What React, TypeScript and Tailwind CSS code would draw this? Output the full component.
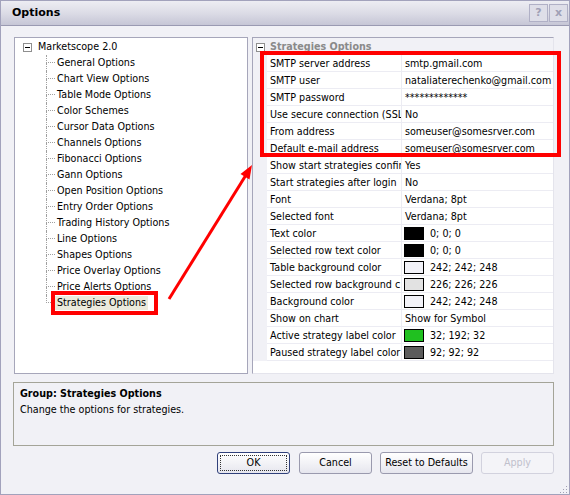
import React from 'react';

const treeItems = [
  'General Options',
  'Chart View Options',
  'Table Mode Options',
  'Color Schemes',
  'Cursor Data Options',
  'Channels Options',
  'Fibonacci Options',
  'Gann Options',
  'Open Position Options',
  'Entry Order Options',
  'Trading History Options',
  'Line Options',
  'Shapes Options',
  'Price Overlay Options',
  'Price Alerts Options',
  'Strategies Options',
];

type Row = { label: string; value: string; color?: string };

// labels are written as far as the narrow column shows them
const rows: Row[] = [
  { label: 'SMTP server address', value: 'smtp.gmail.com' },
  { label: 'SMTP user', value: 'nataliaterechenko@gmail.com' },
  { label: 'SMTP password', value: '*************' },
  { label: 'Use secure connection (SSL', value: 'No' },
  { label: 'From address', value: 'someuser@somesrver.com' },
  { label: 'Default e-mail address', value: 'someuser@somesrver.com' },
  { label: 'Show start strategies confir', value: 'Yes' },
  { label: 'Start strategies after login', value: 'No' },
  { label: 'Font', value: 'Verdana; 8pt' },
  { label: 'Selected font', value: 'Verdana; 8pt' },
  { label: 'Text color', value: '0; 0; 0', color: '#000000' },
  { label: 'Selected row text color', value: '0; 0; 0', color: '#000000' },
  { label: 'Table background color', value: '242; 242; 248', color: '#f2f2f8' },
  { label: 'Selected row background c', value: '226; 226; 226', color: '#e2e2e2' },
  { label: 'Background color', value: '242; 242; 248', color: '#f2f2f8' },
  { label: 'Show on chart', value: 'Show for Symbol' },
  { label: 'Active strategy label color', value: '32; 192; 32', color: '#20c020' },
  { label: 'Paused strategy label color', value: '92; 92; 92', color: '#5c5c5c' },
];

// small [-] expander box used by the tree and the grid category
function Minus() {
  return (
    <div className="w-[9px] h-[9px] shrink-0 border border-[#8f8f8f] bg-white flex items-center justify-center">
      <div className="w-[5px] h-px bg-black" />
    </div>
  );
}

function TitleBar() {
  return (
    <div className="h-[25px] shrink-0 flex items-center justify-between pl-[11px] pr-[1px] bg-gradient-to-b from-[#ededf3] via-[#dcdce6] to-[#c6c6d6] border-b border-[#9a9ab2]">
      <span className="text-[11px] font-bold text-black">Options</span>
      <div className="flex gap-px">
        <div className="w-[19px] h-[18px] border border-[#b0b0c6] bg-[#dedee8] flex items-center justify-center text-[11px] font-bold text-[#a0a0b6]">
          ?
        </div>
        <div className="w-[19px] h-[18px] border border-[#b0b0c6] bg-[#dedee8] flex items-center justify-center text-[11px] font-bold text-[#a0a0b6]">
          x
        </div>
      </div>
    </div>
  );
}

function Tree() {
  return (
    <div className="w-[234px] h-[337px] shrink-0 border border-[#a6a6ba] bg-white pt-px">
      <div className="flex items-center h-[16px] pl-[8px]">
        <Minus />
        <span className="ml-[6px] leading-[16px]">Marketscope 2.0</span>
      </div>
      {treeItems.map((item, i) => {
        const last = i === treeItems.length - 1;
        return (
          <div key={item} className="flex h-[16px]">
            <div className="ml-[31px] w-[9px] flex flex-col">
              <div className="h-[8px] border-l border-b border-dotted border-[#a0a0a0]" />
              <div className={`flex-1 border-dotted border-[#a0a0a0] ${last ? '' : 'border-l'}`} />
            </div>
            <span
              className={`self-center h-[14px] leading-[14px] px-[2px] ${last ? 'bg-[#ebeadc]' : ''}`}
            >
              {item}
            </span>
          </div>
        );
      })}
    </div>
  );
}

function Grid() {
  return (
    <div className="w-[302px] h-[337px] shrink-0 border border-[#a6a6ba] border-r-[#e4e4ec] border-b-[#e4e4ec] bg-white flex flex-col">
      <div className="flex h-[17px] bg-[#f1f1f6] items-center pt-px">
        <div className="w-[14px] flex justify-center">
          <Minus />
        </div>
        <span className="pl-[3px] font-bold text-[#8a8a8a]">Strategies Options</span>
      </div>
      {rows.map((r) => (
        <div key={r.label} className="flex h-[17px]">
          <div className="w-[14px] shrink-0 bg-[#f1f1f6]" />
          <div className="flex flex-1 border-b border-[#ececf3] bg-white">
            <div className="w-[135px] shrink-0 pl-[3px] pt-px border-r border-[#ececf3] overflow-hidden whitespace-nowrap leading-[16px]">
              {r.label}
            </div>
            <div className="flex-1 flex items-center pl-[2px] pt-px whitespace-nowrap overflow-hidden leading-[16px]">
              {r.color ? (
                <>
                  <div
                    className="w-[20px] h-[13px] border border-black shrink-0"
                    style={{ backgroundColor: r.color }}
                  />
                  <span className="ml-[6px]">{r.value}</span>
                </>
              ) : (
                <span className="pl-px">{r.value}</span>
              )}
            </div>
          </div>
        </div>
      ))}
    </div>
  );
}

export default function App() {
  return (
    <div className="relative w-[570px] h-[495px] border border-[#a2a2bc] bg-[#f1f1f6] flex flex-col overflow-hidden font-['DejaVu_Sans',sans-serif] text-[9.6px] text-black">
      <TitleBar />

      <div className="flex mt-[11px] ml-[13px] gap-[4px]">
        <Tree />
        <Grid />
      </div>

      <div className="mt-[8px] ml-[12px] w-[541px] h-[64px] border border-[#a4a498] px-[6px] pt-[2px]">
        <div className="font-bold leading-[17px]">Group: Strategies Options</div>
        <div className="leading-[16px]">Change the options for strategies.</div>
      </div>

      <div className="flex mt-[6px] pl-[216px] h-[22px]">
        <button className="w-[73px] h-[22px] rounded-[3px] border border-[#30407a] bg-gradient-to-b from-white to-[#e6e6ee] p-[2px]">
          <div className="w-full h-full border border-dotted border-[#333] flex items-center justify-center">OK</div>
        </button>
        <button className="ml-[9px] w-[73px] h-[22px] rounded-[3px] border border-[#9a9aae] bg-gradient-to-b from-white to-[#e6e6ee]">
          Cancel
        </button>
        <button className="ml-[8px] w-[93px] h-[22px] rounded-[3px] border border-[#9a9aae] bg-gradient-to-b from-white to-[#e6e6ee]">
          Reset to Defaults
        </button>
        <button className="ml-[8px] w-[73px] h-[22px] rounded-[3px] border border-[#d2d2de] bg-[#f4f4f8] text-[#c0c0cc]">
          Apply
        </button>
      </div>

      {/* annotation overlay: red frames and arrow */}
      <div className="absolute -left-px -top-px w-[570px] h-[495px] pointer-events-none">
        <div className="absolute left-[51px] top-[291px] w-[107px] h-[24px] border-4 border-[#ff0000]" />
        <div className="absolute left-[260px] top-[51px] w-[301px] h-[106px] border-4 border-[#ff0000]" />
        <svg width="570" height="495" className="absolute left-0 top-0">
          <line x1="169" y1="299" x2="246" y2="175" stroke="#ff0000" strokeWidth="3" />
          <polygon points="252,165 249.5,179.5 240.5,174" fill="#ff0000" />
        </svg>
        <svg width="8" height="8" className="absolute left-[560px] top-[486px]">
          <rect x="6" y="0" width="1" height="1" fill="#a0a0b4" />
          <rect x="3" y="3" width="1" height="1" fill="#a0a0b4" />
          <rect x="6" y="3" width="1" height="1" fill="#a0a0b4" />
          <rect x="0" y="6" width="1" height="1" fill="#a0a0b4" />
          <rect x="3" y="6" width="1" height="1" fill="#a0a0b4" />
          <rect x="6" y="6" width="1" height="1" fill="#a0a0b4" />
        </svg>
      </div>
    </div>
  );
}
